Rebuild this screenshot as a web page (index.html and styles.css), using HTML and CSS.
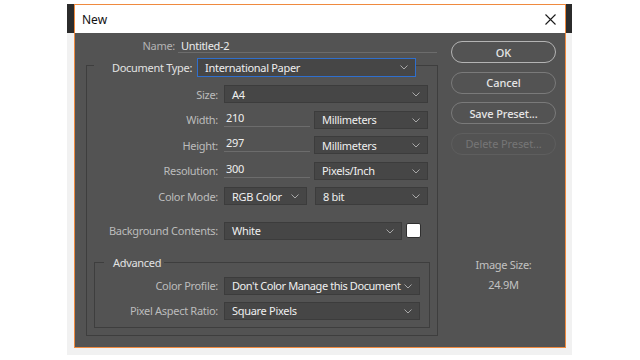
FILE: index.html
```html
<!DOCTYPE html>
<html lang="en">
<head>
    <meta charset="UTF-8">
    <meta name="viewport" content="width=device-width, initial-scale=1.0">
    <title>New</title>
    <link rel="stylesheet" href="styles.css">
</head>
<body>
    <div class="back-window">
        <div class="dialog">
            <!-- Title bar -->
            <div class="titlebar">
                <span class="title">New</span>
                <svg class="close" width="11" height="11" viewBox="0 0 11 11">
                    <path d="M0.5 0.5 L10.5 10.5 M10.5 0.5 L0.5 10.5" stroke="#1a1a1a" stroke-width="1.1" fill="none"/>
                </svg>
            </div>

            <div class="dlg-body">
                <div class="form">
                    <div class="name-row">
                        <span class="name-label">Name:</span>
                        <span class="name-value">Untitled-2</span>
                    </div>

                    <fieldset class="preset">
                        <legend class="preset-legend">
                            <span class="legend-label">Document Type:</span>
                            <div class="select select-doc">International Paper<svg class="chev" width="8" height="5" viewBox="0 0 8 5"><path d="M0.5 0.5 L4 4 L7.5 0.5" stroke="#a8a8a8" fill="none"/></svg></div>
                        </legend>

                        <div class="rows main-rows">
                            <span class="label">Size:</span>
                            <div class="select">A4<svg class="chev" width="8" height="5" viewBox="0 0 8 5"><path d="M0.5 0.5 L4 4 L7.5 0.5" stroke="#a8a8a8" fill="none"/></svg></div>

                            <span class="label">Width:</span>
                            <div class="pair">
                                <div class="input">210</div>
                                <div class="select unit">Millimeters<svg class="chev" width="8" height="5" viewBox="0 0 8 5"><path d="M0.5 0.5 L4 4 L7.5 0.5" stroke="#a8a8a8" fill="none"/></svg></div>
                            </div>

                            <span class="label">Height:</span>
                            <div class="pair">
                                <div class="input">297</div>
                                <div class="select unit">Millimeters<svg class="chev" width="8" height="5" viewBox="0 0 8 5"><path d="M0.5 0.5 L4 4 L7.5 0.5" stroke="#a8a8a8" fill="none"/></svg></div>
                            </div>

                            <span class="label">Resolution:</span>
                            <div class="pair">
                                <div class="input">300</div>
                                <div class="select unit">Pixels/Inch<svg class="chev" width="8" height="5" viewBox="0 0 8 5"><path d="M0.5 0.5 L4 4 L7.5 0.5" stroke="#a8a8a8" fill="none"/></svg></div>
                            </div>

                            <span class="label">Color Mode:</span>
                            <div class="pair mode">
                                <div class="select">RGB Color<svg class="chev" width="8" height="5" viewBox="0 0 8 5"><path d="M0.5 0.5 L4 4 L7.5 0.5" stroke="#a8a8a8" fill="none"/></svg></div>
                                <div class="select unit">8 bit<svg class="chev" width="8" height="5" viewBox="0 0 8 5"><path d="M0.5 0.5 L4 4 L7.5 0.5" stroke="#a8a8a8" fill="none"/></svg></div>
                            </div>

                            <span class="label bg-label">Background Contents:</span>
                            <div class="pair bg-pair">
                                <div class="select">White<svg class="chev" width="8" height="5" viewBox="0 0 8 5"><path d="M0.5 0.5 L4 4 L7.5 0.5" stroke="#a8a8a8" fill="none"/></svg></div>
                                <div class="swatch"></div>
                            </div>
                        </div>

                        <fieldset class="advanced">
                            <legend class="adv-legend">Advanced</legend>
                            <div class="rows adv-rows">
                                <span class="label">Color Profile:</span>
                                <div class="select profile">Don't Color Manage this Document<svg class="chev" width="8" height="5" viewBox="0 0 8 5"><path d="M0.5 0.5 L4 4 L7.5 0.5" stroke="#a8a8a8" fill="none"/></svg></div>

                                <span class="label">Pixel Aspect Ratio:</span>
                                <div class="select">Square Pixels<svg class="chev" width="8" height="5" viewBox="0 0 8 5"><path d="M0.5 0.5 L4 4 L7.5 0.5" stroke="#a8a8a8" fill="none"/></svg></div>
                            </div>
                        </fieldset>
                    </fieldset>
                </div>

                <div class="side">
                    <div class="buttons">
                        <button class="btn btn-default">OK</button>
                        <button class="btn">Cancel</button>
                        <button class="btn">Save Preset...</button>
                        <button class="btn btn-disabled">Delete Preset...</button>
                    </div>
                    <div class="image-size">
                        <div>Image Size:</div>
                        <div class="image-size-value">24.9M</div>
                    </div>
                </div>
            </div>
        </div>
    </div>
</body>
</html>
```

FILE: styles.css
```css
body {
    margin: 0;
    background-color: #fff;
    font-family: "Noto Sans", sans-serif;
    font-size: 11px;
    letter-spacing: -0.3px;
}

.back-window {
    margin: 4px 0 0 67px;
    width: 505px;
    height: 351px;
    padding-left: 7px;
    box-sizing: border-box;
    background: linear-gradient(#2b2b2b 0, #2b2b2b 29px, #f1f1f1 29px);
}

.dialog {
    width: 492px;
    height: 344px;
    box-sizing: border-box;
    border: 1px solid #ef8a3f;
    background-color: #535353;
    display: flex;
    flex-direction: column;
}

.titlebar {
    height: 28px;
    background-color: #fff;
    display: flex;
    align-items: center;
    justify-content: space-between;
    padding: 0 9px 0 7px;
}

.title {
    color: #111;
    font-size: 12px;
    letter-spacing: 0;
}

.dlg-body {
    display: flex;
    padding: 7px 0 0 11px;
}

.form {
    width: 351px;
}

/* Name */
.name-row {
    display: grid;
    grid-template-columns: 92px 1fr;
    height: 13px;
    line-height: 12px;
}

.name-label {
    text-align: right;
    padding-right: 3px;
    color: #b4b4b4;
}

.name-value {
    padding-left: 3px;
    color: #ececec;
    border-bottom: 1px solid #6c6c6c;
}

/* Fieldsets */
.preset {
    margin: 1px 0 0;
    padding: 8px 7px 7px;
    border: 1px solid #3e3e3e;
    width: 351px;
    box-sizing: border-box;
}

.preset-legend {
    display: flex;
    align-items: center;
    padding: 4px 0 0 18px;
}

.legend-label {
    color: #e2e2e2;
    margin-right: 5px;
}

.rows {
    display: grid;
    grid-template-columns: 124px 204px;
    grid-auto-rows: 18px;
    column-gap: 6px;
    row-gap: 7.5px;
    align-items: center;
}

.main-rows {
    grid-template-rows: repeat(5, 18px) 27px;
}

.label {
    text-align: right;
    color: #bcbcbc;
}

.bg-label,
.bg-pair {
    align-self: end;
}

.bg-label {
    line-height: 18px;
}

.select {
    position: relative;
    height: 18px;
    box-sizing: border-box;
    background-color: #464646;
    border: 1px solid #3c3c3c;
    color: #efefef;
    padding-left: 7px;
    display: flex;
    align-items: center;
    white-space: nowrap;
}

.chev {
    position: absolute;
    right: 7px;
    top: 6px;
}

.select-doc {
    width: 219px;
    height: 19px;
    border: 1px solid #2f6fce;
}

.pair {
    display: flex;
    align-items: center;
    gap: 4px;
}

.input {
    width: 86px;
    height: 16px;
    box-sizing: border-box;
    align-self: flex-start;
    padding-left: 2px;
    line-height: 14px;
    color: #efefef;
    border-bottom: 1px solid #6c6c6c;
}

.unit {
    flex: 1;
}

.mode > .select:first-child {
    width: 83px;
    flex: none;
}

.mode {
    gap: 8px;
}

.bg-pair .select {
    width: 178px;
}

.swatch {
    width: 13px;
    height: 13px;
    background-color: #fff;
    border: 1px solid #2f2f2f;
    border-radius: 2px;
}

.advanced {
    margin: 16px 0 0;
    padding: 7px 9px 7px 0;
    border: 1px solid #3e3e3e;
}

.adv-legend {
    margin-left: 9px;
    padding: 0 3px 0 9px;
    color: #e2e2e2;
    line-height: 14px;
}

.adv-rows {
    grid-template-columns: 123px 196px;
    row-gap: 7px;
}

.profile {
    letter-spacing: -0.42px;
}

/* Buttons column */
.side {
    margin-left: 14px;
    width: 105px;
    padding-top: 1px;
}

.buttons {
    display: flex;
    flex-direction: column;
    gap: 8.5px;
}

.btn {
    height: 22px;
    border-radius: 11px;
    border: 1.5px solid #7a7a7a;
    background-color: transparent;
    color: #e6e6e6;
    font-family: "Noto Sans", sans-serif;
    font-size: 11px;
    font-weight: 500;
    letter-spacing: -0.1px;
    padding: 0;
}

.btn-default {
    border-color: #b4b4b4;
}

.btn-disabled {
    border-color: #5e5e5e;
    color: #767676;
    font-weight: normal;
}

.image-size {
    margin-top: 102px;
    text-align: center;
    color: #c2c2c2;
    line-height: 16px;
}

.image-size-value {
    margin-top: 4px;
}
```
